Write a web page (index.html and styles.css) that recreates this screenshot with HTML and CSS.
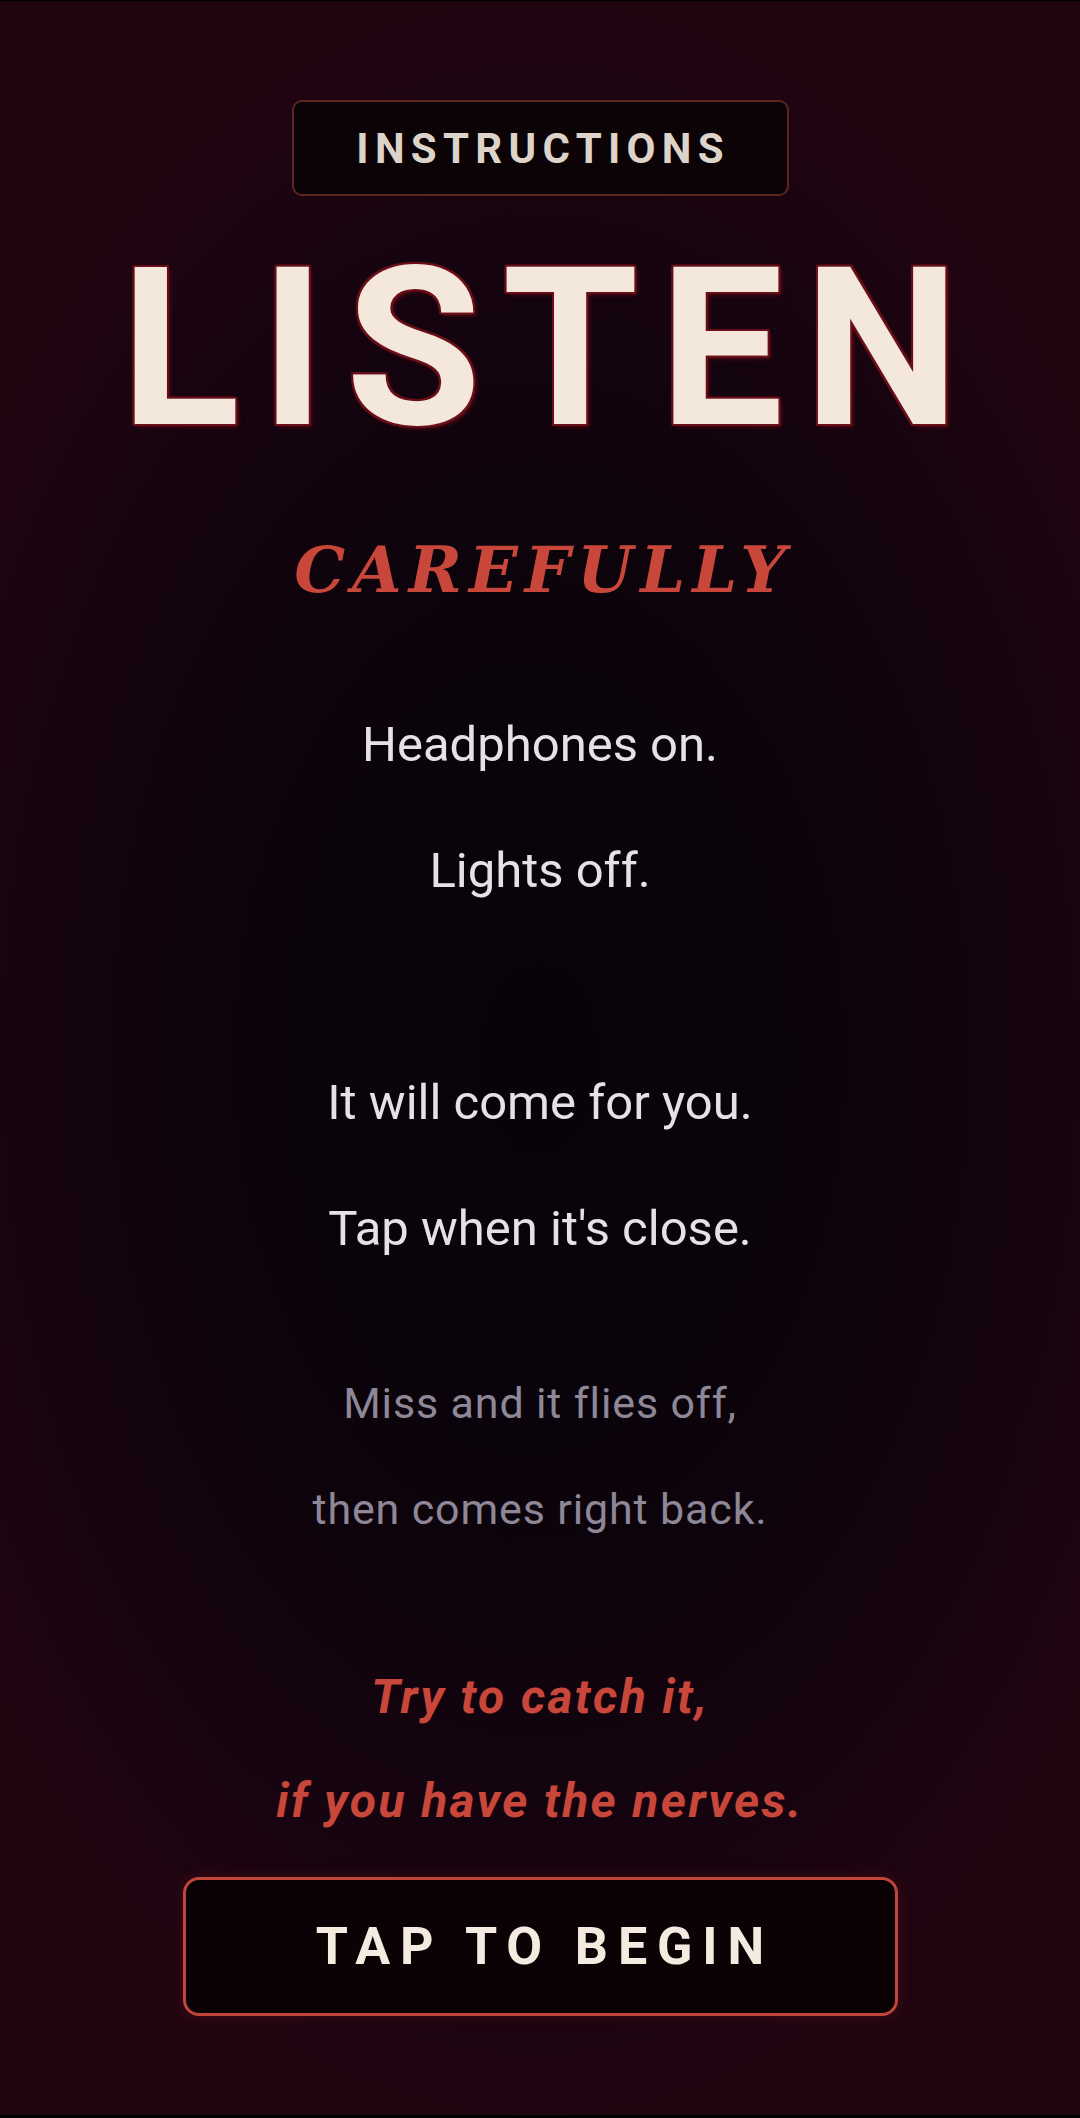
FILE: index.html
```html
<!DOCTYPE html>
<html lang="en">
<head>
<meta charset="utf-8">
<title>Instructions</title>
<link rel="stylesheet" href="styles.css">
</head>
<body>
<main class="screen">
  <div class="pill">INSTRUCTIONS</div>
  <h1 class="title">LISTEN</h1>
  <h2 class="subtitle">CAREFULLY</h2>
  <div class="group group-first">
    <p class="line">Headphones on.</p>
    <p class="line">Lights off.</p>
  </div>
  <div class="group group-second">
    <p class="line">It will come for you.</p>
    <p class="line">Tap when it's close.</p>
  </div>
  <div class="group group-grey">
    <p class="line-grey">Miss and it flies off,</p>
    <p class="line-grey">then comes right back.</p>
  </div>
  <div class="group group-red">
    <p class="line-red">Try to catch it,</p>
    <p class="line-red">if you have the nerves.</p>
  </div>
  <button class="begin">TAP TO BEGIN</button>
</main>
</body>
</html>
```

FILE: styles.css
```css
html {
  background: #000;
}
body {
  margin: 1px 0 0;
  height: 2114px;
  overflow: hidden;
  background: radial-gradient(ellipse 62% 50% at 50% 50%, #07030a 0%, #0c030b 45%, #170410 80%, #200511 100%);
  font-family: Roboto, "Noto Sans", sans-serif;
}
.screen {
  display: flex;
  flex-direction: column;
  align-items: center;
  padding-top: 99px;
}
.pill {
  box-sizing: border-box;
  width: 497px;
  height: 96px;
  border: 2px solid #5e2420;
  border-radius: 10px;
  background: #0b0306;
  color: #ddd3c8;
  font-size: 42px;
  font-weight: 700;
  letter-spacing: 0.15em;
  padding-left: 0.15em;
  display: flex;
  align-items: center;
  justify-content: center;
}
.title {
  margin: 43px 0 0;
  font-size: 220px;
  line-height: 220px;
  font-weight: 700;
  letter-spacing: 0.095em;
  padding-left: 0.095em;
  color: #f4e7dc;
  text-shadow: 2px 0 #6a0f19, -2px 0 #6a0f19, 0 2px #6a0f19, 0 -2px #6a0f19,
    2px 2px #6a0f19, -2px -2px #6a0f19, 2px -2px #6a0f19, -2px 2px #6a0f19,
    3px 3px 4px rgba(110, 10, 20, 0.7);
}
.subtitle {
  margin: 79px 0 0;
  font-family: "DejaVu Serif", "Liberation Serif", serif;
  font-style: italic;
  font-weight: 700;
  font-size: 64px;
  line-height: 64px;
  letter-spacing: 0.11em;
  padding-left: 0.11em;
  color: #c8473a;
}
.group {
  display: flex;
  flex-direction: column;
  align-items: center;
}
.group p {
  margin: 0;
}
.group-first {
  margin-top: 80px;
}
.group-second {
  margin-top: 106px;
}
.group-grey {
  margin-top: 58px;
}
.group-red {
  margin-top: 83px;
}
.line {
  font-size: 49px;
  line-height: 126px;
  color: #e6e1e7;
}
.line-grey {
  font-size: 43px;
  line-height: 106px;
  letter-spacing: 0.02em;
  color: #8d8797;
}
.line-red {
  font-size: 48px;
  line-height: 104px;
  font-style: italic;
  font-weight: 700;
  letter-spacing: 0.05em;
  color: #c8473a;
}
.begin {
  margin-top: 24px;
  box-sizing: border-box;
  width: 715px;
  height: 139px;
  border: 3px solid #c0463a;
  border-radius: 16px;
  background: #0a0205;
  color: #f4eadf;
  font-family: Roboto, "Noto Sans", sans-serif;
  font-size: 52px;
  font-weight: 700;
  letter-spacing: 0.19em;
  padding: 0 0 0 0.19em;
  box-shadow: 0 0 14px rgba(160, 30, 30, 0.25);
}
```
